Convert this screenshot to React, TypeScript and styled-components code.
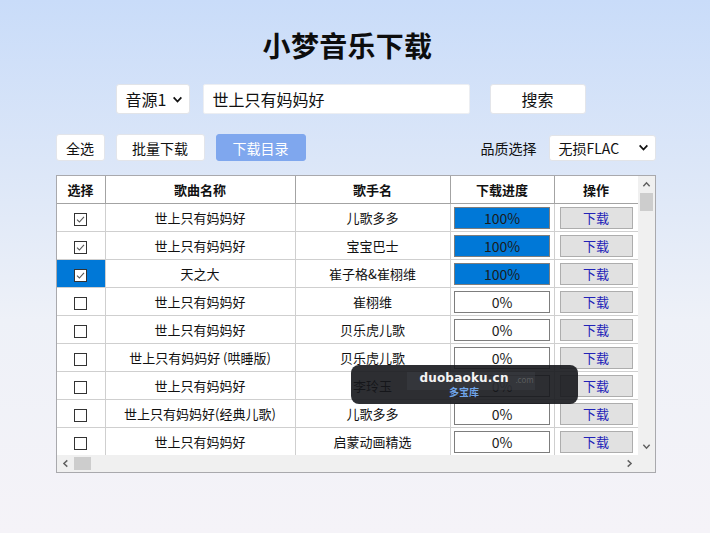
import React from 'react';
import styled, { createGlobalStyle } from 'styled-components';

const GlobalStyle = createGlobalStyle`
  html, body {
    margin: 0;
    padding: 0;
  }
  body {
    font-family: "Noto Sans CJK SC", "Noto Sans", sans-serif;
    color: #111;
  }
`;

interface Song {
  name: string;
  singer: string;
  progress: number;
  checked: boolean;
  active?: boolean;
}

const songs: Song[] = [
  { name: '世上只有妈妈好', singer: '儿歌多多', progress: 100, checked: true },
  { name: '世上只有妈妈好', singer: '宝宝巴士', progress: 100, checked: true },
  { name: '天之大', singer: '崔子格&崔栩维', progress: 100, checked: true, active: true },
  { name: '世上只有妈妈好', singer: '崔栩维', progress: 0, checked: false },
  { name: '世上只有妈妈好', singer: '贝乐虎儿歌', progress: 0, checked: false },
  { name: '世上只有妈妈好 (哄睡版)', singer: '贝乐虎儿歌', progress: 0, checked: false },
  { name: '世上只有妈妈好', singer: '李玲玉', progress: 0, checked: false },
  { name: '世上只有妈妈好(经典儿歌)', singer: '儿歌多多', progress: 0, checked: false },
  { name: '世上只有妈妈好', singer: '启蒙动画精选', progress: 0, checked: false },
];

const Page = styled.div`
  min-height: 533px;
  background: linear-gradient(180deg, #c9dcf9 0%, #dbe6f8 30%, #eef1f8 60%, #f5f3f8 100%);
  overflow: hidden;
`;

const Content = styled.div`
  width: 600px;
  margin: 0 auto;
  padding-left: 1px;
`;

const Title = styled.h1`
  margin: 0;
  padding: 25px 16px 0 0;
  font-size: 28px;
  line-height: 40px;
  font-weight: 700;
  text-align: center;
  color: #0d0d0d;
  letter-spacing: 0.3px;
`;

const SearchRow = styled.div`
  display: flex;
  align-items: center;
  margin-top: 19px;
  padding-left: 60px;
`;

const SelectBox = styled.div<{ $width: number; $height: number; $size: number }>`
  display: flex;
  align-items: center;
  justify-content: space-between;
  box-sizing: border-box;
  width: ${p => p.$width}px;
  height: ${p => p.$height}px;
  padding: 0 6px 0 9px;
  background: #fff;
  border: 1px solid #e2e4e8;
  border-radius: 3px;
  font-size: ${p => p.$size}px;
  color: #111;
`;

const SearchInput = styled.div`
  display: flex;
  align-items: center;
  box-sizing: border-box;
  width: 267px;
  height: 30px;
  margin-left: 13px;
  padding-left: 9px;
  background: #fff;
  border: 1px solid #eceef2;
  border-radius: 2px;
  font-size: 16px;
`;

const Button = styled.div<{ $width: number; $primary?: boolean; $size?: number; $height?: number }>`
  display: flex;
  align-items: center;
  justify-content: center;
  box-sizing: border-box;
  width: ${p => p.$width}px;
  height: ${p => p.$height ?? 27}px;
  background: ${p => (p.$primary ? '#7fa7ee' : '#fff')};
  color: ${p => (p.$primary ? '#fff' : '#111')};
  border: 1px solid ${p => (p.$primary ? '#7fa7ee' : '#e3e5ea')};
  border-radius: 3px;
  font-size: ${p => p.$size ?? 14}px;
`;

const SearchButton = styled(Button)`
  margin-left: 20px;
`;

const Toolbar = styled.div`
  display: flex;
  align-items: center;
  justify-content: space-between;
  margin-top: 20px;
`;

const ToolGroup = styled.div`
  display: flex;
  align-items: center;
  gap: 11px;
`;

const QualityLabel = styled.span`
  font-size: 14px;
  margin-right: 1px;
`;

const Frame = styled.div`
  position: relative;
  display: grid;
  grid-template-columns: 1fr 17px;
  grid-template-rows: 279px 17px;
  margin-top: 14px;
  width: 600px;
  box-sizing: border-box;
  border: 1px solid #a9a9ad;
  background: #fff;
`;

const Viewport = styled.div`
  overflow: hidden;
`;

const Table = styled.table`
  border-collapse: collapse;
  table-layout: fixed;
  width: 581px;
  font-size: 13px;
`;

const HeadCell = styled.th<{ $width?: number }>`
  width: ${p => (p.$width ? `${p.$width}px` : 'auto')};
  height: 27px;
  padding: 0;
  font-weight: 700;
  font-size: 13px;
  text-align: center;
  border-right: 1px solid #a3a3a3;
  border-bottom: 1px solid #a3a3a3;
  &:last-child {
    border-right: none;
  }
`;

const Cell = styled.td<{ $active?: boolean }>`
  height: 27px;
  padding: 0;
  text-align: center;
  white-space: nowrap;
  overflow: hidden;
  background: ${p => (p.$active ? '#0078d7' : '#fff')};
  border-right: 1px solid #cfcfcf;
  border-bottom: 1px solid #cfcfcf;
  &:last-child {
    border-right: none;
  }
`;

const Check = styled.span`
  display: inline-flex;
  align-items: center;
  justify-content: center;
  box-sizing: border-box;
  width: 13px;
  height: 13px;
  vertical-align: middle;
  background: #fff;
  border: 1px solid #333;
`;

const Progress = styled.div<{ $done: boolean }>`
  display: flex;
  align-items: center;
  justify-content: center;
  box-sizing: border-box;
  width: 96px;
  height: 22px;
  margin: 0 auto;
  background: ${p => (p.$done ? '#0078d7' : '#fff')};
  border: 1px solid #7d7d7d;
  font-size: 14px;
  color: #1b1b1b;
`;

const DownloadButton = styled.div`
  display: flex;
  align-items: center;
  justify-content: center;
  box-sizing: border-box;
  width: 73px;
  height: 22px;
  margin: 0 auto;
  background: #e1e1e1;
  border: 1px solid #adadad;
  color: #2323b8;
  font-size: 13px;
`;

const VScroll = styled.div`
  display: flex;
  flex-direction: column;
  align-items: center;
  background: #f0f0f0;
`;

const HScroll = styled.div`
  display: flex;
  align-items: center;
  background: #f0f0f0;
`;

const Corner = styled.div`
  background: #f0f0f0;
`;

const Arrow = styled.div`
  display: flex;
  align-items: center;
  justify-content: center;
  width: 17px;
  height: 17px;
  flex-shrink: 0;
  color: #606060;
`;

const VThumb = styled.div`
  width: 13px;
  height: 18px;
  background: #cdcdcd;
`;

const HThumb = styled.div`
  width: 17px;
  height: 13px;
  background: #cdcdcd;
`;

const Spacer = styled.div`
  flex: 1;
`;

const Watermark = styled.div`
  position: absolute;
  left: 294px;
  top: 189px;
  width: 227px;
  height: 39px;
  display: flex;
  flex-direction: column;
  align-items: center;
  justify-content: center;
  border-radius: 8px;
  background: rgba(22, 23, 28, 0.9);
`;

const WatermarkInner = styled.div`
  position: absolute;
  left: 56px;
  top: 7px;
  width: 128px;
  height: 18px;
  background: rgba(60, 62, 68, 0.5);
`;

const WatermarkGhost = styled.span`
  position: absolute;
  left: 165px;
  top: 10px;
  font-size: 8px;
  line-height: 10px;
  color: rgba(150, 150, 150, 0.4);
`;

const WatermarkTitle = styled.div`
  position: relative;
  font-family: "DejaVu Sans", "Noto Sans", sans-serif;
  font-weight: 700;
  font-size: 12px;
  line-height: 15px;
  letter-spacing: 0.2px;
  color: #f4f4f4;
`;

const WatermarkSub = styled.div`
  position: relative;
  font-size: 10px;
  line-height: 12px;
  font-weight: 700;
  color: #6fa4e8;
`;

const Chevron = ({ dir, size = 9 }: { dir: 'down' | 'up' | 'left' | 'right'; size?: number }) => {
  const rot = { down: 0, up: 180, left: 90, right: -90 }[dir];
  return (
    <svg width={size} height={size} viewBox="0 0 10 10" style={{ transform: `rotate(${rot}deg)` }}>
      <polyline points="1.5,3 5,6.8 8.5,3" fill="none" stroke="currentColor" strokeWidth="1.6" />
    </svg>
  );
};

const CheckMark = () => (
  <svg width="11" height="11" viewBox="0 0 11 11">
    <polyline points="2,5.6 4.4,8 9,2.8" fill="none" stroke="#555" strokeWidth="1.1" />
  </svg>
);

export default function App() {
  return (
    <Page>
      <GlobalStyle />
      <Content>
        <Title>小梦音乐下载</Title>

        <SearchRow>
          <SelectBox $width={74} $height={30} $size={16}>
            <span>音源1</span>
            <Chevron dir="down" size={11} />
          </SelectBox>
          <SearchInput>世上只有妈妈好</SearchInput>
          <SearchButton $width={96} $height={30} $size={16}>搜索</SearchButton>
        </SearchRow>

        <Toolbar>
          <ToolGroup>
            <Button $width={49}>全选</Button>
            <Button $width={89}>批量下载</Button>
            <Button $width={90} $primary>下载目录</Button>
          </ToolGroup>
          <ToolGroup>
            <QualityLabel>品质选择</QualityLabel>
            <SelectBox $width={107} $height={26} $size={14}>
              <span>无损FLAC</span>
              <Chevron dir="down" size={11} />
            </SelectBox>
          </ToolGroup>
        </Toolbar>

        <Frame>
          <Viewport>
            <Table>
              <thead>
                <tr>
                  <HeadCell $width={48}>选择</HeadCell>
                  <HeadCell $width={189}>歌曲名称</HeadCell>
                  <HeadCell $width={154}>歌手名</HeadCell>
                  <HeadCell $width={103}>下载进度</HeadCell>
                  <HeadCell>操作</HeadCell>
                </tr>
              </thead>
              <tbody>
                {songs.map((s, i) => (
                  <tr key={i}>
                    <Cell $active={s.active}>
                      <Check>{s.checked && <CheckMark />}</Check>
                    </Cell>
                    <Cell>{s.name}</Cell>
                    <Cell>{s.singer}</Cell>
                    <Cell>
                      <Progress $done={s.progress === 100}>{s.progress}%</Progress>
                    </Cell>
                    <Cell>
                      <DownloadButton>下载</DownloadButton>
                    </Cell>
                  </tr>
                ))}
              </tbody>
            </Table>
          </Viewport>
          <VScroll>
            <Arrow><Chevron dir="up" /></Arrow>
            <VThumb />
            <Spacer />
            <Arrow><Chevron dir="down" /></Arrow>
          </VScroll>
          <HScroll>
            <Arrow><Chevron dir="left" /></Arrow>
            <HThumb />
            <Spacer />
            <Arrow><Chevron dir="right" /></Arrow>
          </HScroll>
          <Corner />

          <Watermark>
            <WatermarkInner />
            <WatermarkGhost>.com</WatermarkGhost>
            <WatermarkTitle>duobaoku.cn</WatermarkTitle>
            <WatermarkSub>多宝库</WatermarkSub>
          </Watermark>
        </Frame>
      </Content>
    </Page>
  );
}
